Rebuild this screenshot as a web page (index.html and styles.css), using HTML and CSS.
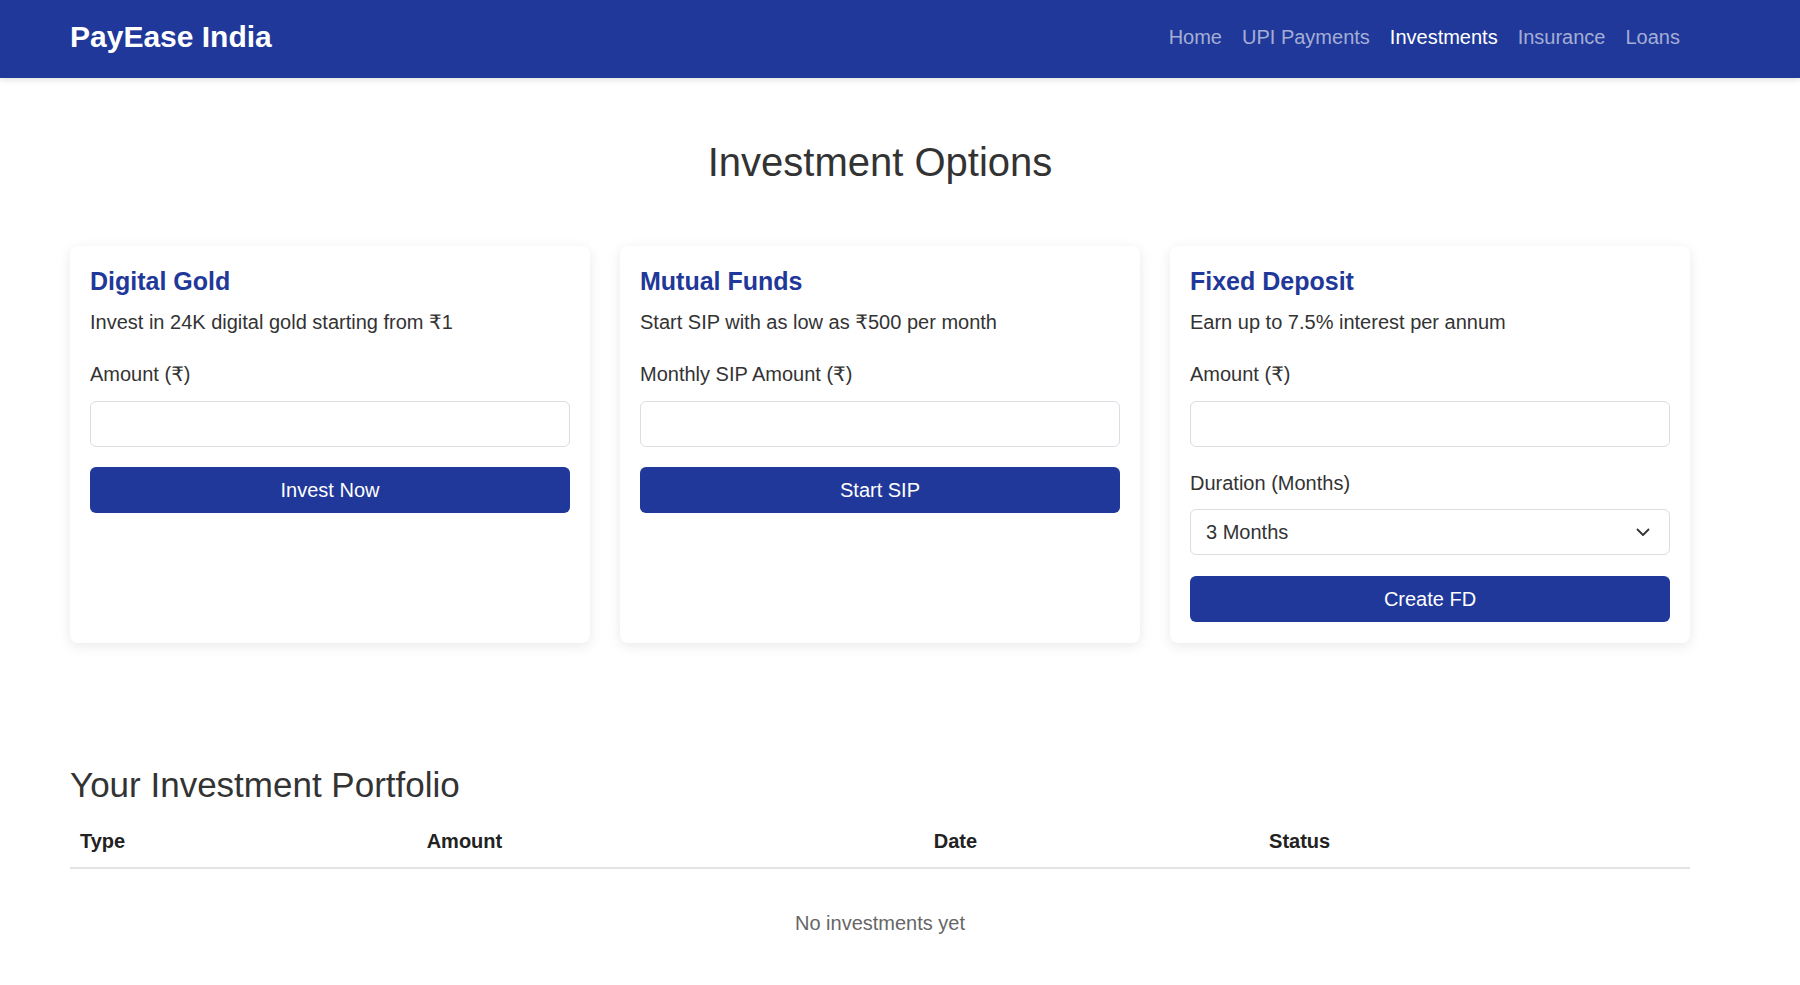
FILE: index.html
```html
<!DOCTYPE html>
<html lang="en">
<head>
<meta charset="utf-8">
<title>PayEase India - Investments</title>
<link rel="stylesheet" href="styles.css">
</head>
<body>
<header class="site-header">
  <div class="header-inner">
    <div class="logo">PayEase India</div>
    <nav class="nav">
      <a class="nav-link" href="#">Home</a>
      <a class="nav-link" href="#">UPI Payments</a>
      <a class="nav-link active" href="#">Investments</a>
      <a class="nav-link" href="#">Insurance</a>
      <a class="nav-link" href="#">Loans</a>
    </nav>
  </div>
</header>

<main class="container">
  <h1 class="page-title">Investment Options</h1>

  <section class="cards">
    <div class="card">
      <h3 class="card-title">Digital Gold</h3>
      <p class="card-desc">Invest in 24K digital gold starting from ₹1</p>
      <label class="field-label">Amount (₹)</label>
      <input class="field-input" type="number">
      <button class="btn">Invest Now</button>
    </div>

    <div class="card">
      <h3 class="card-title">Mutual Funds</h3>
      <p class="card-desc">Start SIP with as low as ₹500 per month</p>
      <label class="field-label">Monthly SIP Amount (₹)</label>
      <input class="field-input" type="number">
      <button class="btn">Start SIP</button>
    </div>

    <div class="card">
      <h3 class="card-title">Fixed Deposit</h3>
      <p class="card-desc">Earn up to 7.5% interest per annum</p>
      <label class="field-label">Amount (₹)</label>
      <input class="field-input" type="number">
      <label class="field-label field-label-tight">Duration (Months)</label>
      <div class="select-wrap">
        <select class="field-select">
          <option>3 Months</option>
          <option>6 Months</option>
          <option>12 Months</option>
          <option>24 Months</option>
        </select>
        <svg class="select-chevron" width="14" height="9" viewBox="0 0 14 9" aria-hidden="true">
          <path d="M1.5 1.5 L7 7 L12.5 1.5" fill="none" stroke="#333" stroke-width="1.8" stroke-linecap="round" stroke-linejoin="round"/>
        </svg>
      </div>
      <button class="btn">Create FD</button>
    </div>
  </section>

  <h2 class="section-title">Your Investment Portfolio</h2>
  <table class="portfolio">
    <thead>
      <tr>
        <th class="col-type">Type</th>
        <th class="col-amount">Amount</th>
        <th class="col-date">Date</th>
        <th class="col-status">Status</th>
      </tr>
    </thead>
    <tbody>
      <tr>
        <td class="empty" colspan="4">No investments yet</td>
      </tr>
    </tbody>
  </table>
</main>
</body>
</html>
```

FILE: styles.css
```css
* {
  box-sizing: border-box;
}

html, body {
  margin: 0;
  padding: 0;
}

body {
  font-family: "Liberation Sans", Arial, "DejaVu Sans", sans-serif;
  font-size: 20px;
  line-height: 1.6;
  color: #333;
  background: #fff;
}

.site-header {
  background: #1f3899;
  box-shadow: 0 2px 6px rgba(0, 0, 0, 0.12);
}

.header-inner {
  width: 1620px;
  margin-left: 70px;
  height: 78px;
  display: flex;
  align-items: center;
  justify-content: space-between;
}

.logo {
  color: #fff;
  font-size: 30px;
  font-weight: bold;
  line-height: 36px;
  margin-top: -4px;
}

.nav {
  display: flex;
  padding-right: 0;
  margin-top: -4px;
}

.nav-link {
  color: rgba(255, 255, 255, 0.6);
  text-decoration: none;
  font-size: 20px;
  line-height: 24px;
  padding: 0 10px;
}

.nav-link.active {
  color: #fff;
}

.container {
  width: 1620px;
  margin-left: 70px;
  padding-top: 60px;
}

.page-title {
  margin: 0 0 60px;
  text-align: center;
  font-size: 40px;
  line-height: 48px;
  font-weight: normal;
  color: #333;
}

.cards {
  display: grid;
  grid-template-columns: repeat(3, 1fr);
  gap: 30px;
}

.card {
  background: #fff;
  border-radius: 8px;
  box-shadow: 0 3px 13px rgba(0, 0, 0, 0.09);
  padding: 20px 20px 21px;
  display: flex;
  flex-direction: column;
}

.card-title {
  margin: 0 0 10px;
  color: #1f3899;
  font-size: 25px;
  line-height: 30px;
  font-weight: bold;
}

.card-desc {
  margin: 0 0 20px;
  line-height: 32px;
}

.field-label {
  display: block;
  line-height: 32px;
  margin-bottom: 11px;
}

.field-label-tight {
  margin-bottom: 10px;
}

.field-input,
.field-select {
  display: block;
  width: 100%;
  height: 46px;
  border: 1px solid #dcdde3;
  border-radius: 6px;
  background: #fff;
  font-family: inherit;
  font-size: 20px;
  color: #333;
  padding: 0 15px;
  outline: none;
}

.field-input {
  margin-bottom: 20px;
}

.select-wrap {
  position: relative;
  margin-bottom: 21px;
}

.field-select {
  appearance: none;
  -webkit-appearance: none;
  padding-left: 15px;
}

.select-chevron {
  position: absolute;
  right: 20px;
  top: 19px;
  pointer-events: none;
}

.btn {
  display: block;
  width: 100%;
  height: 46px;
  border: none;
  border-radius: 6px;
  background: #1f3899;
  color: #fff;
  font-family: inherit;
  font-size: 20px;
  cursor: pointer;
}

.section-title {
  margin: 121px 0 9px;
  font-size: 35px;
  line-height: 42px;
  font-weight: normal;
  color: #333;
}

.portfolio {
  width: 100%;
  border-collapse: collapse;
  table-layout: fixed;
}

.portfolio th {
  text-align: left;
  font-weight: bold;
  padding: 10px;
  line-height: 32px;
  border-bottom: 2px solid #e3e3e3;
  color: #222;
}

.col-type { width: 21.4%; }
.col-amount { width: 31.3%; }
.col-date { width: 20.7%; }
.col-status { width: 26.6%; }

.portfolio .empty {
  text-align: center;
  color: #666;
  padding: 38px 10px 0;
  line-height: 32px;
}
```
